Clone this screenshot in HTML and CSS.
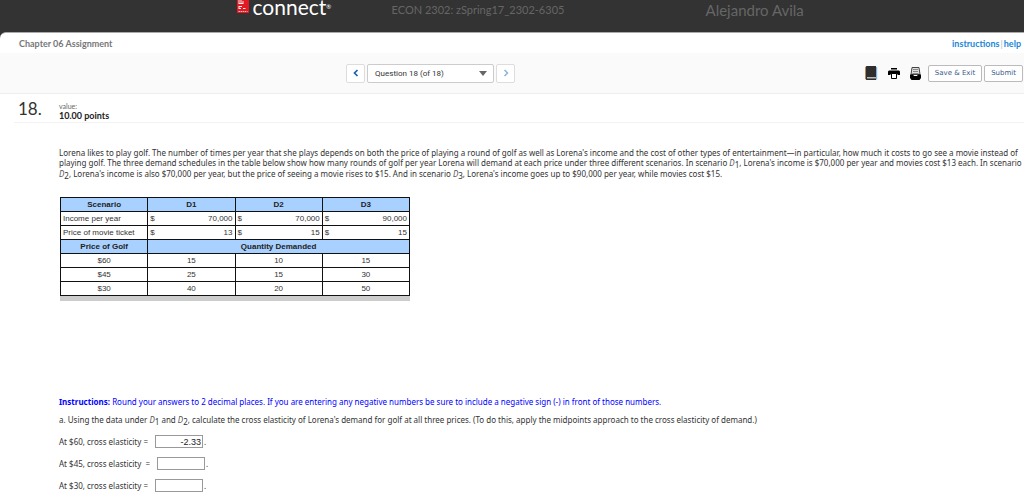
FILE: index.html
```html
<!DOCTYPE html>
<html lang="en">
<head>
<meta charset="utf-8">
<title>Chapter 06 Assignment</title>
<link rel="stylesheet" href="styles.css">
</head>
<body>
<header class="masthead">
  <div class="brand">
    <svg class="brand-mark" width="12" height="14" viewBox="0 0 12 14" aria-hidden="true">
      <rect width="12" height="13" fill="#e21a23"/>
      <path d="M2 0v4M4 0v3M6 1v3M2 6v3M2 6.500h3M2 3.500h4M2 8.500h2M6 8.500h2.500" stroke="#fff" stroke-width=".9"/>
      <path d="M1.500 11.500h9" stroke="#fbb" stroke-width="1" stroke-dasharray="1.500 .6"/>
    </svg>
    <span class="brand-name">connect<span class="brand-reg">®</span></span>
  </div>
  <div class="course">ECON 2302: zSpring17_2302-6305</div>
  <div class="student">Alejandro Avila</div>
</header>
<main class="page">
  <div class="titlebar">
    <h1 class="title">Chapter 06 Assignment</h1>
    <div class="links"><a href="#instructions">instructions</a><span class="divider">|</span><a href="#help">help</a></div>
  </div>
  <div class="toolbar">
    <nav class="pager" aria-label="Question navigation">
      <button class="step" type="button" aria-label="Previous question">
        <svg width="6" height="8" viewBox="0 0 6 8"><path d="M4.500 1 1.500 4l3 3" fill="none" stroke="#1c5fae" stroke-width="1.700"/></svg>
      </button>
      <div class="picker">
        <select class="picker-select" aria-label="Question"><option>Question 18 (of 18)</option></select>
        <svg class="picker-arrow" width="8" height="5" viewBox="0 0 8 5"><path d="M0 0h8L4 5z" fill="#666"/></svg>
      </div>
      <button class="step" type="button" aria-label="Next question">
        <svg width="6" height="8" viewBox="0 0 6 8"><path d="m1.500 1 3 3-3 3" fill="none" stroke="#8fb3d9" stroke-width="1.500"/></svg>
      </button>
    </nav>
    <div class="tools">
      <button class="tool" type="button" aria-label="eBook">
        <svg width="13" height="14" viewBox="0 0 13 14"><path d="M1.500 0H11v14H1.500L0 12.500v-11z" fill="#2e2e2e"/><path d="M2 11h9v1.500H2z" fill="#bbb"/><path d="M11 1h1.200v12.500H11z" fill="#7fb4dc"/><path d="M0 1h.8v12H0z" fill="#dba065"/></svg>
      </button>
      <button class="tool" type="button" aria-label="Print">
        <svg width="12" height="11" viewBox="0 0 12 11"><path d="M3 0h6v1.500H3zM1 2.500h10l1 1V7H9.500V6h-7v1H0V3.500z" fill="#000"/><path d="M3.500 5.500h5v5h-5z" fill="#fff" stroke="#000"/></svg>
      </button>
      <button class="tool" type="button" aria-label="Reference">
        <svg width="11" height="13" viewBox="0 0 11 13"><path d="M2 .5h7l1 7H1z" fill="#ddd" stroke="#444"/><path d="M3 2.500h5M3 4.500h5M2.500 6.500h6" stroke="#888"/><path d="M0 7.500h3l1 1.500h3l1-1.500h3V11l-1.500 2h-8L0 11z" fill="#000"/></svg>
      </button>
      <button class="action" type="button">Save &amp; Exit</button>
      <button class="action" type="button">Submit</button>
    </div>
  </div>
  <div class="question-head">
    <div class="number">18.</div>
    <div class="worth">
      <div class="worth-label">value:</div>
      <div class="worth-points">10.00 points</div>
    </div>
  </div>
  <article class="question">
    <p class="prompt">Lorena likes to play golf. The number of times per year that she plays depends on both the price of playing a round of golf as well as Lorena's income and the cost of other types of entertainment—in particular, how much it costs to go see a movie instead of<br>playing golf. The three demand schedules in the table below show how many rounds of golf per year Lorena will demand at each price under three different scenarios. In scenario <i>D</i><sub>1</sub>, Lorena's income is $70,000 per year and movies cost $13 each. In scenario<br><i>D</i><sub>2</sub>, Lorena's income is also $70,000 per year, but the price of seeing a movie rises to $15. And in scenario <i>D</i><sub>3</sub>, Lorena's income goes up to $90,000 per year, while movies cost $15.</p>
    <div class="schedule-wrap">
      <table class="schedule">
        <thead>
          <tr><th>Scenario</th><th>D1</th><th>D2</th><th>D3</th></tr>
        </thead>
        <tbody>
          <tr><td class="label">Income per year</td><td><span class="money"><span>$</span><span>70,000</span></span></td><td><span class="money"><span>$</span><span>70,000</span></span></td><td><span class="money"><span>$</span><span>90,000</span></span></td></tr>
          <tr><td class="label">Price of movie ticket</td><td><span class="money"><span>$</span><span>13</span></span></td><td><span class="money"><span>$</span><span>15</span></span></td><td><span class="money"><span>$</span><span>15</span></span></td></tr>
          <tr><th>Price of Golf</th><th colspan="3">Quantity Demanded</th></tr>
          <tr><td>$60</td><td>15</td><td>10</td><td>15</td></tr>
          <tr><td>$45</td><td>25</td><td>15</td><td>30</td></tr>
          <tr><td>$30</td><td>40</td><td>20</td><td>50</td></tr>
        </tbody>
      </table>
    </div>
    <p class="instructions" id="instructions"><b>Instructions:</b> Round your answers to 2 decimal places. If you are entering any negative numbers be sure to include a negative sign (-) in front of those numbers.</p>
    <p class="part">a. Using the data under <i>D</i><sub>1</sub> and <i>D</i><sub>2</sub>, calculate the cross elasticity of Lorena's demand for golf at all three prices. (To do this, apply the midpoints approach to the cross elasticity of demand.)</p>
    <div class="answer"><label for="e60">At $60, cross elasticity =</label><input class="field" id="e60" type="text" value="-2.33"><span>.</span></div>
    <div class="answer"><label for="e45">At $45, cross elasticity &nbsp;=</label><input class="field" id="e45" type="text"><span>.</span></div>
    <div class="answer"><label for="e30">At $30, cross elasticity =</label><input class="field" id="e30" type="text"><span>.</span></div>
  </article>
</main>
</body>
</html>
```
FILE: styles.css
```css
* { box-sizing: border-box; }
body {
  margin: 0;
  background: #333;
  color: #333;
  font-family: "Liberation Sans", Arial, sans-serif;
  font-size: 9px;
}
h1, p { margin: 0; }
button { padding: 0; font: inherit; cursor: pointer; }
.masthead {
  display: grid;
  grid-template-columns: 156px 314px 1fr;
  height: 32px;
  padding-left: 23%;
  overflow: hidden;
  color: #666;
  font-family: Lato, sans-serif;
  line-height: 20px;
}
.brand { display: flex; gap: 4px; height: 14px; padding-left: 1px; }
.brand-name { color: #fff; font-size: 21px; line-height: 13px; white-space: nowrap; }
.brand-reg { font-size: 6px; vertical-align: 6px; line-height: 1; }
.course { font-size: 11px; }
.student { font-size: 15px; }
.page {
  min-height: calc(100vh - 32px);
  background: #fff;
  border-top: 1px solid #aaa;
  border-top-left-radius: 6px;
}
.titlebar {
  display: flex;
  justify-content: space-between;
  align-items: center;
  height: 20px;
  padding: 0 3px 0 19px;
  font-family: Lato, sans-serif;
}
.title { color: #777; font-size: 9px; font-weight: 700; }
.links { display: flex; gap: 1px; font-size: 9px; font-weight: 700; }
.links a { color: #1b87d6; text-decoration: none; }
.divider { color: #bbb; font-weight: 400; }
.toolbar {
  display: flex;
  align-items: center;
  justify-content: space-between;
  height: 41px;
  padding: 0 1px 0 33.8%;
  background: #fafafa;
  border-bottom: 1px solid #eee;
}
.pager { display: flex; gap: 2px; }
.step {
  display: grid;
  place-items: center;
  width: 19px;
  height: 19px;
  background: #fff;
  border: 1px solid #ddd;
  border-radius: 2px;
}
.picker { position: relative; width: 127px; height: 19px; }
.picker-select {
  appearance: none;
  width: 100%;
  height: 100%;
  padding: 0 20px 0 7px;
  background: #fff;
  border: 1px solid #ccc;
  border-radius: 2px;
  color: #333;
  font-family: Roboto, sans-serif;
  font-size: 8px;
}
.picker-arrow { position: absolute; top: 7px; right: 7px; pointer-events: none; }
.tools { display: flex; align-items: center; gap: 2px; }
.tool {
  display: grid;
  place-items: center;
  width: 20px;
  height: 19px;
  background: none;
  border: 0;
}
.action {
  height: 17px;
  padding: 0 6px;
  background: #fff;
  border: 1px solid #bbb;
  border-radius: 2px;
  color: #3a5a8c;
  font-family: "DejaVu Sans", sans-serif;
  font-size: 7px;
}
.question-head {
  display: flex;
  align-items: center;
  height: 29px;
  margin-left: 14px;
  padding-left: 4px;
  border-bottom: 1px solid #f2f2f2;
  font-family: Lato, sans-serif;
}
.number { width: 41px; font-size: 17px; }
.worth { padding-top: 6px; line-height: 9px; color: #222; }
.worth-label { color: #666; font-size: 7px; }
.worth-points { font-size: 9px; font-weight: 700; }
.question { padding: 25px 0 0 59px; }
.question sub { font-size: 8px; line-height: 1; vertical-align: -2px; }
.question i { color: #555; }
.prompt, .instructions, .part, .answer { font-family: "Noto Sans", sans-serif; font-size: 8px; white-space: nowrap; }
.prompt { line-height: 10px; }
.schedule-wrap {
  width: 350px;
  margin-top: 17px;
  margin-left: 1px;
  padding-bottom: 5px;
  background: #ccc;
}
.schedule {
  width: 100%;
  table-layout: fixed;
  border-collapse: collapse;
  background: #fff;
  font-size: 8px;
}
.schedule th, .schedule td {
  height: 14px;
  padding: 0 2px;
  border: 1px solid #111;
  line-height: 10px;
  text-align: center;
}
.schedule th { background: #a8d1ff; color: #222; }
.schedule .label { text-align: left; white-space: nowrap; }
.money { display: flex; justify-content: space-between; }
.instructions { margin-top: 95px; color: #00f; line-height: 12px; }
.part { margin-top: 6px; line-height: 12px; }
.answer { display: flex; align-items: center; gap: 1px; height: 13px; margin-top: 9px; }
.field {
  width: 48px;
  height: 13px;
  margin-left: 6px;
  padding: 0 1px;
  border: 1px solid #999;
  color: #222;
  font-family: "Liberation Sans", Arial, sans-serif;
  font-size: 9px;
  text-align: right;
}
```
